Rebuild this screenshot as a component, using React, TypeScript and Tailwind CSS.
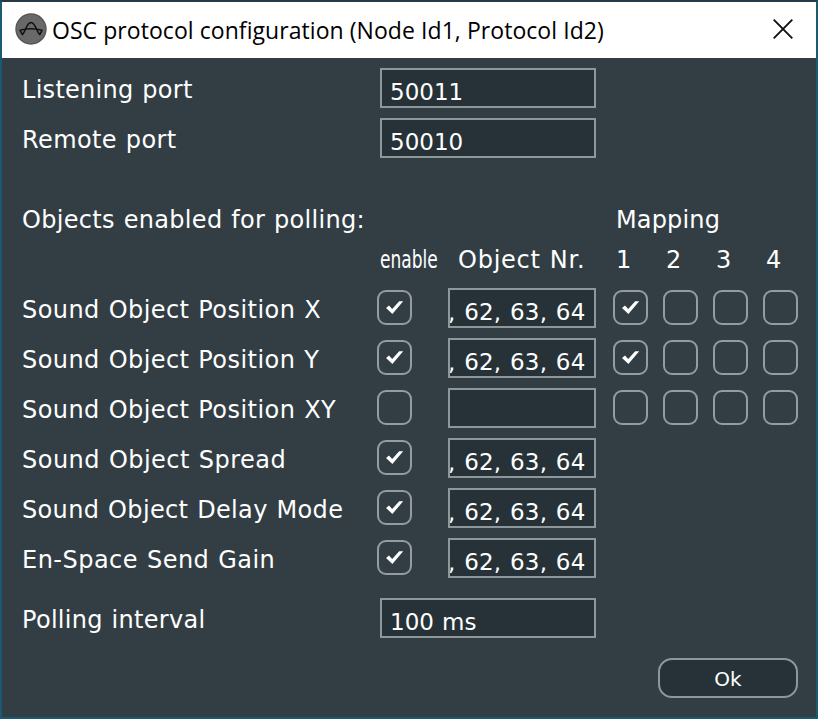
import React from "react";

const sans = "font-['DejaVu_Sans','Noto_Sans',sans-serif]";

function Label({ children, className = "" }: { children: React.ReactNode; className?: string }) {
  return (
    <div className={`h-10 shrink-0 whitespace-nowrap pt-0.5 text-[24px] leading-10 ${className}`}>{children}</div>
  );
}

function Check({ on }: { on?: boolean }) {
  return (
    <div className="mt-0.5 flex size-[35px] shrink-0 items-center justify-center rounded-[9px] border-2 border-[#969ba2]">
      {on && (
        <svg width="35" height="35" viewBox="0 0 35 35" className="shrink-0">
          <path d="M9 18 L12 15.6 L15.2 19 L22.2 11.2 L26.200 11.2 L15.4 24 Z" fill="#fff" />
        </svg>
      )}
    </div>
  );
}

function Field({ value, className }: { value: string; className: string }) {
  return (
    <div
      className={`flex h-10 shrink-0 overflow-hidden whitespace-pre border-2 border-[#8e989b] bg-[#263238] pt-1 text-[23px] leading-9 ${className}`}
    >
      {value}
    </div>
  );
}

const rows = [
  { name: "Sound Object Position X", on: true, value: ", 62, 63, 64", map: [true, false, false, false], tracking: "tracking-[0.44px]" },
  { name: "Sound Object Position Y", on: true, value: ", 62, 63, 64", map: [true, false, false, false], tracking: "tracking-[0.44px]" },
  { name: "Sound Object Position XY", on: false, value: "", map: [false, false, false, false], tracking: "tracking-[0.44px]" },
  { name: "Sound Object Spread", on: true, value: ", 62, 63, 64", map: [], tracking: "tracking-[0.48px]" },
  { name: "Sound Object Delay Mode", on: true, value: ", 62, 63, 64", map: [], tracking: "tracking-[0.35px]" },
  { name: "En-Space Send Gain", on: true, value: ", 62, 63, 64", map: [], tracking: "tracking-[0.48px]" },
];

export default function App() {
  return (
    <div className={`h-[719px] w-[818px] overflow-hidden border-2 border-[#1b5872] border-t-[#263b47] bg-[#323e44] text-white ${sans}`}>
      <header className="flex h-14 items-center bg-white pl-[13px] pr-[23px] text-black">
        <svg width="32" height="32" viewBox="0 0 32 32" className="-mt-0.5 shrink-0">
          <circle cx="16" cy="16" r="15" fill="#696969" stroke="#555" strokeWidth="1.4" />
          <path
            d="M5 17.3 Q16 14.3 27 17.3 L24.800 21.600 C21.500 19 20.500 9.400 16 9.400 C11.500 9.400 10.500 19 7.400 21.600 Z"
            fill="none"
            stroke="#101010"
            strokeWidth="1.5"
            strokeLinejoin="round"
          />
        </svg>
        <h1 className="ml-[5px] flex-1 whitespace-nowrap font-['Open_Sans','Noto_Sans',sans-serif] text-[23px] leading-8 tracking-[0.06px]">
          OSC protocol configuration (Node Id1, Protocol Id2)
        </h1>
        <svg width="20" height="20" viewBox="0 0 20 20" className="-mt-0.5 shrink-0">
          <path d="M0.700 0.700 L19.300 19.300 M19.300 0.700 L0.700 19.300" stroke="#111" strokeWidth="1.9" />
        </svg>
      </header>
      <main className="flex flex-col pl-5 pr-[18px] pt-2.5">
        <div className="flex h-[50px]">
          <Label className="w-[358px] tracking-[0.28px] [word-spacing:0.8px]">Listening port</Label>
          <Field value="50011" className="w-[216px] pl-[8px]" />
        </div>
        <div className="flex h-[50px]">
          <Label className="w-[358px] tracking-[0.4px] [word-spacing:0.8px]">Remote port</Label>
          <Field value="50010" className="w-[216px] pl-[8px]" />
        </div>
        <div className="mt-[30px] flex h-10">
          <Label className="w-[594px] tracking-[0.32px] [word-spacing:0.8px]">Objects enabled for polling:</Label>
          <Label className="tracking-[0.15px]">Mapping</Label>
        </div>
        <div className="flex h-[50px] pl-[358px]">
          <Label className="w-[78px]">
            <span className="inline-block origin-left scale-x-[0.71]">enable</span>
          </Label>
          <Label className="w-[158px] tracking-[0.75px] [word-spacing:0.8px]">Object Nr.</Label>
          {["1", "2", "3", "4"].map((n) => (
            <Label key={n} className="w-[50px]">{n}</Label>
          ))}
        </div>
        <div className="flex flex-col">
          {rows.map((r) => (
            <div key={r.name} className="flex h-[50px]">
              <Label className={`w-[355px] [word-spacing:0.8px] ${r.tracking}`}>{r.name}</Label>
              <Check on={r.on} />
              <Field value={r.value} className="ml-9 w-[148px] justify-end pr-[8.5px] tracking-[0.18px] [word-spacing:1.2px]" />
              <div className="ml-[17px] flex gap-[15px]">
                {r.map.map((on, i) => (
                  <Check key={i} on={on} />
                ))}
              </div>
            </div>
          ))}
        </div>
        <div className="mt-2.5 flex h-[60px]">
          <Label className="w-[358px] tracking-[0.3px] [word-spacing:0.8px]">Polling interval</Label>
          <Field value="100 ms" className="w-[216px] pl-[8px] [word-spacing:0.8px]" />
        </div>
        <button className="flex h-10 w-[140px] items-center justify-center self-end rounded-[14px] border-2 border-[#8e989b] bg-[#263238] pt-0.5 text-[20px]">
          Ok
        </button>
      </main>
    </div>
  );
}
